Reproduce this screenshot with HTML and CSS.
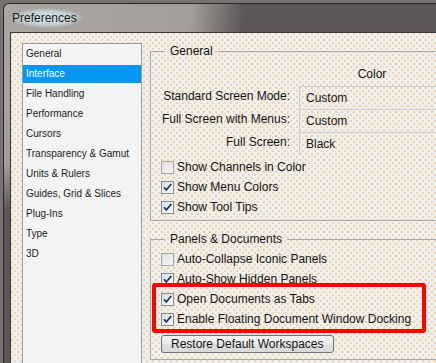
FILE: index.html
```html
<!DOCTYPE html>
<html lang="en">
<head>
    <meta charset="UTF-8">
    <meta name="viewport" content="width=device-width, initial-scale=1.0">
    <title>Preferences</title>
    <link rel="stylesheet" href="styles.css">
</head>
<body>
    <div class="window">
        <div class="titlebar"><span class="title">Preferences</span></div>
        <div class="client">
            <ul class="nav">
                <li>General</li>
                <li class="active">Interface</li>
                <li>File Handling</li>
                <li>Performance</li>
                <li>Cursors</li>
                <li>Transparency &amp; Gamut</li>
                <li>Units &amp; Rulers</li>
                <li>Guides, Grid &amp; Slices</li>
                <li>Plug-Ins</li>
                <li>Type</li>
                <li>3D</li>
            </ul>

            <div class="panel">
                <fieldset class="group">
                    <legend>General</legend>
                    <div class="modes">
                        <div class="modes-head"></div>
                        <div class="modes-head color-head">Color</div>
                        <div class="mode-label">Standard Screen Mode:</div>
                        <div class="mode-value">Custom</div>
                        <div class="mode-label">Full Screen with Menus:</div>
                        <div class="mode-value">Custom</div>
                        <div class="mode-label">Full Screen:</div>
                        <div class="mode-value">Black</div>
                    </div>
                    <label class="check"><span class="box"></span>Show Channels in Color</label>
                    <label class="check"><span class="box on"><svg viewBox="0 0 11 11" width="11" height="11"><path d="M2 5.2l2.3 2.8L9.2 2" fill="none" stroke="#1f2f5a" stroke-width="1.7"/></svg></span>Show Menu Colors</label>
                    <label class="check"><span class="box on"><svg viewBox="0 0 11 11" width="11" height="11"><path d="M2 5.2l2.3 2.8L9.2 2" fill="none" stroke="#1f2f5a" stroke-width="1.7"/></svg></span>Show Tool Tips</label>
                </fieldset>

                <fieldset class="group group-panels">
                    <legend>Panels &amp; Documents</legend>
                    <div class="checks">
                        <label class="check"><span class="box"></span>Auto-Collapse Iconic Panels</label>
                        <label class="check"><span class="box on"><svg viewBox="0 0 11 11" width="11" height="11"><path d="M2 5.2l2.3 2.8L9.2 2" fill="none" stroke="#1f2f5a" stroke-width="1.7"/></svg></span>Auto-Show Hidden Panels</label>
                        <div class="marked">
                            <label class="check"><span class="box on"><svg viewBox="0 0 11 11" width="11" height="11"><path d="M2 5.2l2.3 2.8L9.2 2" fill="none" stroke="#1f2f5a" stroke-width="1.7"/></svg></span>Open Documents as Tabs</label>
                            <label class="check"><span class="box on"><svg viewBox="0 0 11 11" width="11" height="11"><path d="M2 5.2l2.3 2.8L9.2 2" fill="none" stroke="#1f2f5a" stroke-width="1.7"/></svg></span>Enable Floating Document Window Docking</label>
                        </div>
                    </div>
                    <button type="button" class="btn">Restore Default Workspaces</button>
                </fieldset>
            </div>
        </div>
    </div>
</body>
</html>
```

FILE: styles.css
```css
html, body {
    margin: 0;
    height: 100%;
    overflow: hidden;
}

body {
    background-color: #77726f;
    font-family: "Liberation Sans", Arial, sans-serif;
}

/* la ventana sigue mas alla del borde derecho e inferior */
.window {
    box-sizing: border-box;
    display: flex;
    flex-direction: column;
    margin: 3px 0 0 3px;
    height: calc(100% - 3px);
    padding-left: 6px;
    border: 1px solid #2c292b;
    border-right: none;
    border-bottom: none;
    border-radius: 6px 0 0 0;
    background: radial-gradient(240px 205px at 0 0, #aba6a2 0, #a39e9a 78%, #5d5659 100%), #5d5659;
}

.titlebar {
    height: 28px;
    flex-shrink: 0;
    display: flex;
    align-items: center;
}

.title {
    font-size: 12px;
    color: #1b1b1b;
    padding: 3px 7px 3px 2px;
    background: radial-gradient(closest-side, rgba(218, 242, 249, 0.95), rgba(214, 240, 248, 0.55) 70%, rgba(214, 240, 248, 0));
}

.client {
    flex: 1;
    display: flex;
    min-height: 0;
    padding: 10px 0 0 11px;
    border: 1px solid #3b3739;
    border-right: none;
    border-bottom: none;
    background-color: #f1efec;
    /* trama de puntos del gif */
    background-image:
        radial-gradient(circle at 1px 1px, #efcf9f 0.8px, transparent 1.1px),
        radial-gradient(circle at 1px 1px, #e9d6bb 0.8px, transparent 1.1px);
    background-size: 6px 6px, 6px 6px;
    background-position: 0 0, 3px 3px;
}

.nav {
    list-style: none;
    margin: 0;
    padding: 1px 0 0;
    width: 118px;
    flex-shrink: 0;
    border: 1px solid #9d9d9d;
    border-bottom: none;
    background-color: #f3f3f3;
    font-size: 10px;
    color: #1c1c1c;
}

.nav li {
    height: 18px;
    line-height: 18px;
    margin-bottom: 2px;
    padding-left: 3px;
}

.nav .active {
    background-color: #0598f2;
    color: #ffffff;
}

.panel {
    flex: 1;
    min-width: 0;
    margin: 1px 0 0 8px;
    font-size: 12px;
    color: #141414;
}

.group {
    margin: 0;
    padding: 0 0 3px 10px;
    border: 1px solid #a9a9a9;
    border-right: none;
    min-width: 0;
}

.group legend {
    margin-left: 4px;
    padding: 0 5px;
    line-height: 14px;
}

.modes {
    display: grid;
    grid-template-columns: 138px 1fr;
    margin: 4px 0 2px;
}

.modes-head {
    height: 24px;
    line-height: 24px;
}

.color-head {
    text-align: center;
    padding-left: 9px;
}

.mode-label {
    text-align: right;
    padding-right: 9px;
    line-height: 21px;
}

.mode-value {
    border-left: 1px solid #cdcdcd;
    border-top: 1px solid #cdcdcd;
    padding-left: 6px;
    line-height: 22px;
}

.check {
    display: flex;
    align-items: center;
    height: 20px;
    white-space: nowrap;
}

.box {
    width: 13px;
    height: 13px;
    flex-shrink: 0;
    box-sizing: border-box;
    margin-right: 3px;
    border: 1px solid #a6a6a6;
    background: linear-gradient(135deg, #dedede, #f8f8f8);
}

.box.on {
    border-color: #8c8c8c;
    background: linear-gradient(135deg, #cfe4ee, #fbfbfb);
}

.box svg {
    display: block;
}

.group-panels {
    margin-top: 11px;
    padding-bottom: 6px;
}

.checks {
    margin-top: 3px;
}

.marked {
    position: relative;
}

.marked::after {
    content: "";
    position: absolute;
    left: -9px;
    top: -6px;
    width: 274px;
    height: 50px;
    box-sizing: border-box;
    border: 4px solid #ff0000;
    border-radius: 3px;
}

.btn {
    display: block;
    margin-top: 6px;
    height: 18px;
    padding: 0 9px;
    font: inherit;
    color: #141414;
    border: 1px solid #707070;
    border-radius: 3px;
    background: linear-gradient(#f4f4f4, #ebebeb 50%, #e0e0e0 51%, #d9d9d9);
}
```
